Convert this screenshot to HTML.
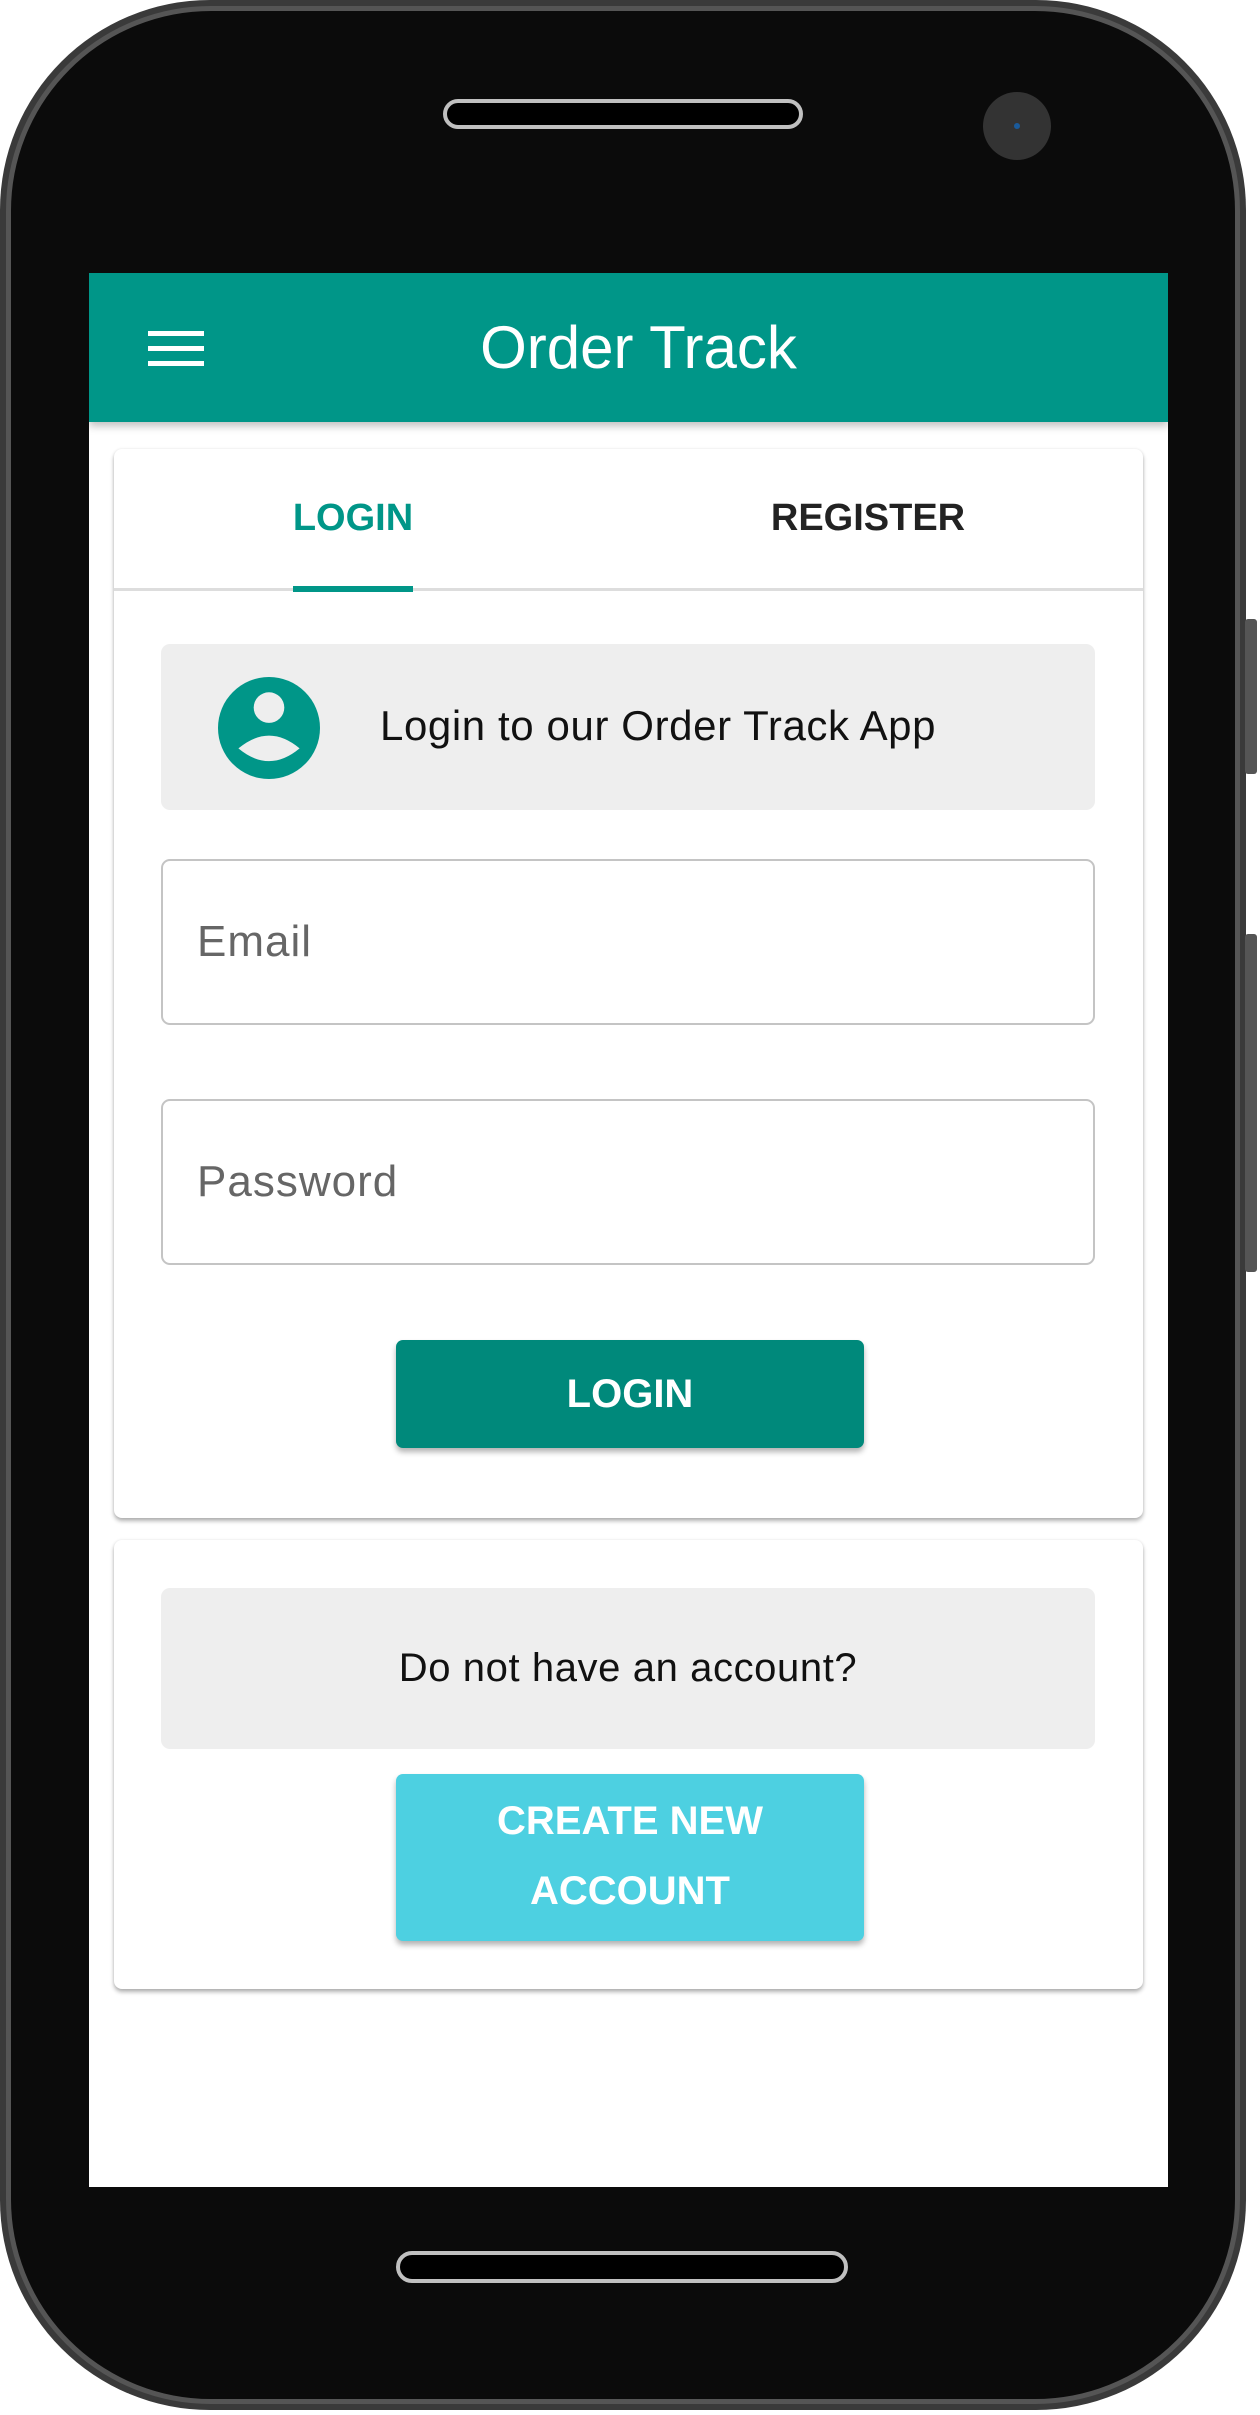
<!DOCTYPE html>
<html><head><meta charset="utf-8"><style>
*{margin:0;padding:0;box-sizing:border-box}
body{width:1260px;height:2415px;background:#fff;position:relative;overflow:hidden;font-family:"Liberation Sans",sans-serif}
.abs{position:absolute}
.phone{left:0;top:0;width:1246px;height:2410px;background:#3a3a3a;border-radius:210px;}
.phone2{left:6px;top:6px;width:1234px;height:2398px;background:#0b0b0b;border-radius:205px;border:5px solid #555}
.screen{left:89px;top:273px;width:1079px;height:1914px;background:#fff;overflow:hidden}
.card{background:#fff;border-radius:8px;box-shadow:0 3px 4px rgba(0,0,0,.3),0 0 3px rgba(0,0,0,.08)}
.box{background:#eeeeee;border-radius:9px}
.inp{border:2px solid #c4c4c4;border-radius:9px;color:#666;font-size:44px;padding-left:34px;display:flex;align-items:center;letter-spacing:1px}
.btn{border-radius:7px;color:#fff;font-weight:bold;text-align:center;box-shadow:0 4px 6px rgba(0,0,0,.3)}
</style></head><body>
<div class="abs phone"></div>
<div class="abs phone2"></div>
<div class="abs" style="left:1245px;top:619px;width:12px;height:155px;background:#555;border-radius:3px"></div>
<div class="abs" style="left:1245px;top:934px;width:12px;height:338px;background:#555;border-radius:3px"></div>
<div class="abs" style="left:443px;top:99px;width:360px;height:30px;border:4px solid #c0c0c0;border-radius:15px;background:#000"></div>
<div class="abs" style="left:983px;top:92px;width:68px;height:68px;border-radius:50%;background:#333"><div class="abs" style="left:31px;top:31px;width:6px;height:6px;border-radius:50%;background:#1a5a9a"></div></div>
<div class="abs" style="left:396px;top:2251px;width:452px;height:32px;border:4px solid #c0c0c0;border-radius:16px;background:#000"></div>

<div class="abs screen">
  <div class="abs" style="left:0;top:0;width:1079px;height:149px;background:#009688;box-shadow:0 4px 8px rgba(0,0,0,.25)">
    <div class="abs" style="left:59px;top:58px;width:56px;height:5px;background:#fff"></div>
    <div class="abs" style="left:59px;top:73px;width:56px;height:5px;background:#fff"></div>
    <div class="abs" style="left:59px;top:88px;width:56px;height:5px;background:#fff"></div>
    <div class="abs" style="left:0;width:1079px;top:40px;text-align:center;color:#fff;font-size:60px;line-height:70px;padding-left:20px">Order Track</div>
  </div>
  <div class="abs card" style="left:25px;top:176px;width:1029px;height:1069px">
    <div class="abs" style="left:0;top:0;width:1029px;height:142px;border-bottom:3px solid #ddd"></div>
    <div class="abs" style="left:179px;top:137px;width:120px;height:6px;background:#009688"></div>
    <div class="abs" style="left:139px;width:200px;top:44px;text-align:center;color:#009688;font-size:38px;font-weight:bold;line-height:50px">LOGIN</div>
    <div class="abs" style="left:644px;width:220px;top:44px;text-align:center;color:#222;font-size:38px;font-weight:bold;line-height:50px">REGISTER</div>
    <div class="abs box" style="left:47px;top:195px;width:934px;height:166px">
      <svg class="abs" style="left:57px;top:33px" width="102" height="102" viewBox="0 0 100 100"><circle cx="50" cy="50" r="50" fill="#009688"/><circle cx="50" cy="30" r="15" fill="#eee"/><path d="M20 70 Q50 45 80 70 Q50 95 20 70Z" fill="#eee"/></svg>
      <div class="abs" style="left:219px;top:56px;font-size:42px;line-height:52px;color:#111;letter-spacing:0.6px">Login to our Order Track App</div>
    </div>
    <div class="abs inp" style="left:47px;top:410px;width:934px;height:166px">Email</div>
    <div class="abs inp" style="left:47px;top:650px;width:934px;height:166px">Password</div>
    <div class="abs btn" style="left:282px;top:891px;width:468px;height:108px;background:#00897b;font-size:40px;line-height:108px">LOGIN</div>
  </div>
  <div class="abs card" style="left:25px;top:1267px;width:1029px;height:449px">
    <div class="abs box" style="left:47px;top:48px;width:934px;height:161px;text-align:center;font-size:40px;line-height:161px;color:#111;letter-spacing:0.6px">Do not have an account?</div>
    <div class="abs btn" style="left:282px;top:234px;width:468px;height:167px;background:#4dd0e1;font-size:40px;line-height:70px;padding-top:12px">CREATE NEW<br>ACCOUNT</div>
  </div>
</div>
</body></html>
